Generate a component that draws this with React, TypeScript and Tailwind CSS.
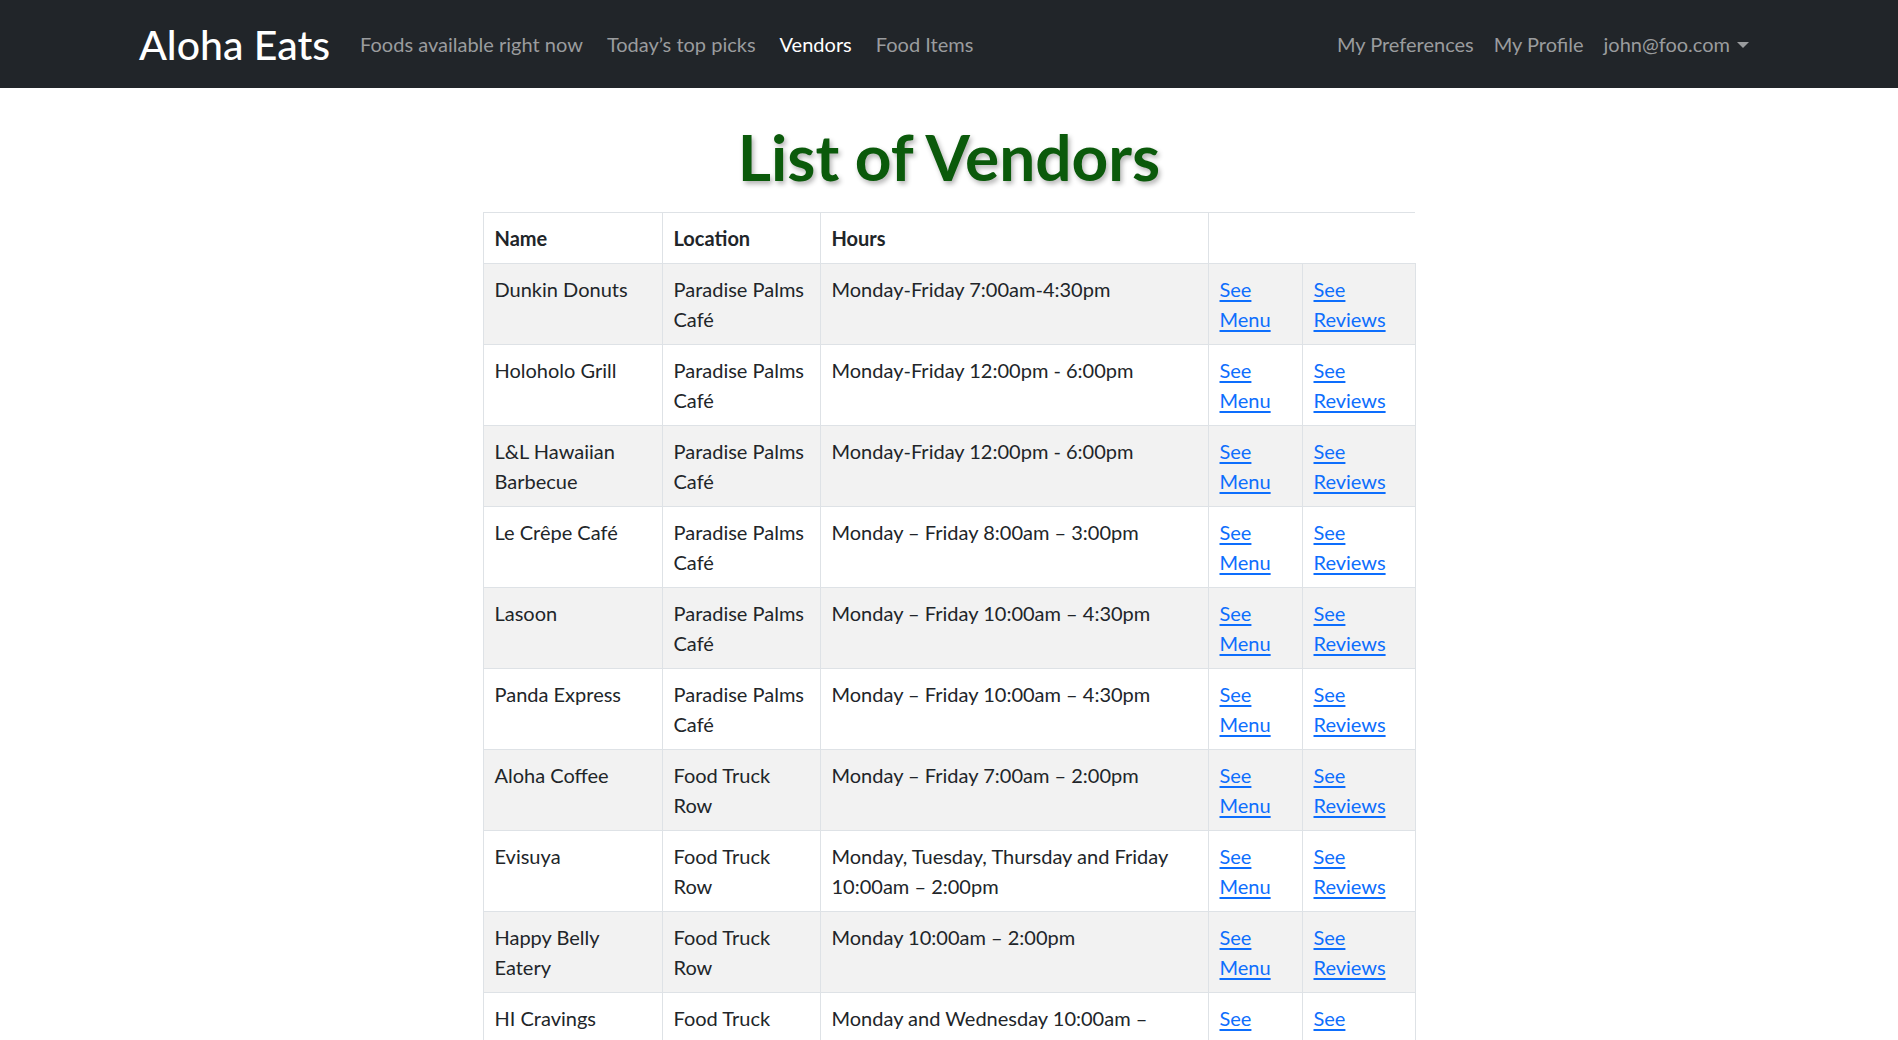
import React from 'react';

type Vendor = {
  name: string;
  location: string;
  hours: string;
};

const vendors: Vendor[] = [
  { name: 'Dunkin Donuts', location: 'Paradise Palms Café', hours: 'Monday-Friday 7:00am-4:30pm' },
  { name: 'Holoholo Grill', location: 'Paradise Palms Café', hours: 'Monday-Friday 12:00pm - 6:00pm' },
  { name: 'L&L Hawaiian Barbecue', location: 'Paradise Palms Café', hours: 'Monday-Friday 12:00pm - 6:00pm' },
  { name: 'Le Crêpe Café', location: 'Paradise Palms Café', hours: 'Monday – Friday 8:00am – 3:00pm' },
  { name: 'Lasoon', location: 'Paradise Palms Café', hours: 'Monday – Friday 10:00am – 4:30pm' },
  { name: 'Panda Express', location: 'Paradise Palms Café', hours: 'Monday – Friday 10:00am – 4:30pm' },
  { name: 'Aloha Coffee', location: 'Food Truck Row', hours: 'Monday – Friday 7:00am – 2:00pm' },
  { name: 'Evisuya', location: 'Food Truck Row', hours: 'Monday, Tuesday, Thursday and Friday 10:00am – 2:00pm' },
  { name: 'Happy Belly Eatery', location: 'Food Truck Row', hours: 'Monday 10:00am – 2:00pm' },
  { name: 'HI Cravings', location: 'Food Truck Row', hours: 'Monday and Wednesday 10:00am – 2:00pm' },
  { name: 'Sweet Home Waimanalo', location: 'Food Truck Row', hours: 'Tuesday – Thursday 10:00am – 2:00pm' },
];

const leftLinks = [
  { label: 'Foods available right now', active: false },
  { label: 'Today’s top picks', active: false },
  { label: 'Vendors', active: true },
  { label: 'Food Items', active: false },
];

function NavBar() {
  return (
    <nav className="bg-[#212529] h-[88px]">
      <div className="mx-auto w-[1650px] h-full px-[15px] flex items-center">
        <a className="text-white text-[41px] leading-none mr-[18px] font-medium">Aloha Eats</a>
        <ul className="flex items-center">
          {leftLinks.map((link) => (
            <li key={link.label}>
              <a
                className={
                  'block px-[12px] text-[20px] leading-[30px] ' +
                  (link.active ? 'text-white' : 'text-[#9a9c9e]')
                }
              >
                {link.label}
              </a>
            </li>
          ))}
        </ul>
        <ul className="ml-auto flex items-center pr-[10px]">
          <li>
            <a className="block px-[10px] text-[20px] leading-[30px] text-[#9a9c9e]">My Preferences</a>
          </li>
          <li>
            <a className="block px-[10px] text-[20px] leading-[30px] text-[#9a9c9e]">My Profile</a>
          </li>
          <li>
            <a className="flex items-center pl-[10px] text-[20px] leading-[30px] text-[#9a9c9e]">
              john@foo.com
              <span className="ml-[7px] mt-[1px] w-0 h-0 border-l-[6px] border-r-[6px] border-t-[6px] border-l-transparent border-r-transparent border-t-[#9a9c9e]" />
            </a>
          </li>
        </ul>
      </div>
    </nav>
  );
}

function VendorTable() {
  const cell = 'px-[11px] py-[10px] align-top border border-[#dee2e6]';
  return (
    <table className="mx-auto w-[932px] table-fixed border-collapse text-[20px] leading-[30px] text-[#212529]">
      <colgroup>
        <col className="w-[179px]" />
        <col className="w-[158px]" />
        <col className="w-[388px]" />
        <col className="w-[94px]" />
        <col className="w-[113px]" />
      </colgroup>
      <thead>
        <tr>
          <th className={cell + ' text-left font-bold'}>Name</th>
          <th className={cell + ' text-left font-bold'}>Location</th>
          <th className={cell + ' text-left font-bold'}>Hours</th>
          <th colSpan={2} className="px-[11px] py-[10px] border-t border-b border-l border-[#dee2e6]" />
        </tr>
      </thead>
      <tbody>
        {vendors.map((v, i) => (
          <tr key={v.name} className={i % 2 === 0 ? 'bg-[#f2f2f2]' : 'bg-white'}>
            <td className={cell}>{v.name}</td>
            <td className={cell}>{v.location}</td>
            <td className={cell}>{v.hours}</td>
            <td className={cell}>
              <a className="text-[#0d6efd] underline underline-offset-[3px]">See Menu</a>
            </td>
            <td className={cell}>
              <a className="text-[#0d6efd] underline underline-offset-[3px]">See Reviews</a>
            </td>
          </tr>
        ))}
      </tbody>
    </table>
  );
}

export default function App() {
  return (
    <div className="min-h-screen bg-white font-['Lato','Liberation_Sans',sans-serif]">
      <NavBar />
      <div className="pt-[24px] pb-10">
        <h1 className="text-center text-[64px] leading-[90px] font-bold text-[#0b5a0b] [text-shadow:2px_3px_5px_rgba(0,0,0,0.3)] mb-[10px]">
          List of Vendors
        </h1>
        <VendorTable />
      </div>
    </div>
  );
}
